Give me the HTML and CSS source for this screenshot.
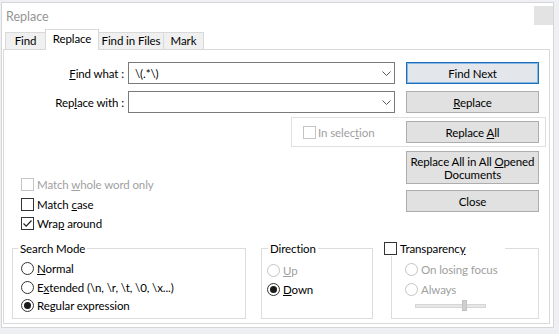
FILE: index.html
```html
<!DOCTYPE html>
<html>
<head>
<meta charset="utf-8">
<link rel="stylesheet" href="styles.css">
</head>
<body>
<div class="window">
  <div class="titlebar">
    <span class="title">Replace</span>
    <span class="close-btn"></span>
  </div>
  <div class="tabs">
    <div class="tab w-find">Find</div>
    <div class="tab active w-replace">Replace</div>
    <div class="tab w-files">Find in Files</div>
    <div class="tab w-mark">Mark</div>
  </div>
  <div class="panel">
    <div class="row first">
      <label class="lbl"><u>F</u>ind what :</label>
      <div class="combo"><span class="combo-text">\(.*\)</span><svg class="chev" width="9" height="5" viewBox="0 0 9 5"><path d="M0.5 0.5 L4.5 4.5 L8.5 0.5" fill="none" stroke="#555" stroke-width="1"/></svg></div>
      <button class="btn default">Find Next</button>
    </div>
    <div class="row second">
      <label class="lbl">Rep<u>l</u>ace with :</label>
      <div class="combo"><span class="combo-text"></span><svg class="chev" width="9" height="5" viewBox="0 0 9 5"><path d="M0.5 0.5 L4.5 4.5 L8.5 0.5" fill="none" stroke="#555" stroke-width="1"/></svg></div>
      <button class="btn"><u>R</u>eplace</button>
    </div>
    <div class="selbox">
      <span class="chk disabled"><span class="box"></span><span>In selec<u>t</u>ion</span></span>
      <button class="btn">Replace <u>A</u>ll</button>
    </div>
    <div class="mid">
      <div class="checks">
        <div class="chk disabled"><span class="box"></span><span>Match <u>w</u>hole word only</span></div>
        <div class="chk gap7"><span class="box"></span><span>Match <u>c</u>ase</span></div>
        <div class="chk gap6"><span class="box"><svg width="11" height="11" viewBox="0 0 11 11"><path d="M1.5 5.5 L4.2 8.2 L9.5 2.5" fill="none" stroke="#222" stroke-width="1.2"/></svg></span><span>Wra<u>p</u> around</span></div>
      </div>
      <div class="btncol">
        <button class="btn tall">Replace All in All <u>O</u>pened<br>Documents</button>
        <button class="btn">Close</button>
      </div>
    </div>
    <div class="groups">
      <fieldset class="grp g-search">
        <legend class="leg-search">Search Mode</legend>
        <div class="grp-body search-body">
          <div class="radio"><span class="dot"></span><span><u>N</u>ormal</span></div>
          <div class="radio r-gap6"><span class="dot"></span><span>E<u>x</u>tended (\n, \r, \t, \0, \x...)</span></div>
          <div class="radio on r-gap5"><span class="dot"></span><span>Re<u>g</u>ular expression</span></div>
        </div>
      </fieldset>
      <fieldset class="grp g-dir">
        <legend class="leg-dir">Direction</legend>
        <div class="grp-body dir-body">
          <div class="radio disabled"><span class="dot"></span><span><u>U</u>p</span></div>
          <div class="radio on r-gap6"><span class="dot"></span><span><u>D</u>own</span></div>
        </div>
      </fieldset>
      <fieldset class="grp g-trans">
        <legend class="leg-trans"><span class="chk"><span class="box"></span><span>Transparenc<u>y</u></span></span></legend>
        <div class="grp-body trans-body">
          <div class="radio disabled"><span class="dot"></span><span>On losing focus</span></div>
          <div class="radio disabled r-gap7"><span class="dot"></span><span>Always</span></div>
          <div class="slider"><span class="track"></span><span class="thumb"></span></div>
        </div>
      </fieldset>
    </div>
  </div>
</div>
</body>
</html>
```
FILE: styles.css
```css
* { box-sizing: border-box; }
html, body { margin: 0; padding: 0; }
body {
  width: 559px;
  height: 334px;
  overflow: hidden;
  background: #eef0f3;
  font-family: Lato, "Liberation Sans", sans-serif;
  font-size: 11.5px;
  letter-spacing: -0.1px;
  color: #000;
}
u { text-underline-offset: 1px; }

.window {
  margin: 2px 5px 0 1px;
  height: 326px;
  border: 1px solid #d6d6da;
  background: #fff;
  display: flex;
  flex-direction: column;
}

.titlebar {
  height: 26px;
  display: flex;
  justify-content: space-between;
  align-items: center;
  padding-left: 4px;
}
.title { font-size: 12.5px; color: #959595; letter-spacing: 0; }
.close-btn {
  align-self: flex-start;
  margin-top: 3px;
  width: 19px;
  height: 19px;
  background: #e3e3e3;
}

.tabs {
  height: 20px;
  display: flex;
  align-items: flex-end;
  padding-left: 3px;
}
.tab {
  height: 17px;
  border: 1px solid #d9d9d9;
  border-bottom: none;
  background: #f0f0f0;
  margin-left: -1px;
  display: flex;
  align-items: center;
  justify-content: center;
  padding-bottom: 1px;
}
.tab.active {
  height: 21px;
  margin-bottom: -1px;
  background: #fff;
  position: relative;
  z-index: 1;
  padding-bottom: 4px;
}
.w-find { width: 41px; margin-left: 0; }
.w-replace { width: 54px; }
.w-files { width: 66px; }
.w-mark { width: 41px; }

.panel {
  flex: 1;
  margin: 0 3px 3px 1px;
  border: 1px solid #d9d9d9;
  background: #fff;
}

.row {
  display: flex;
  align-items: center;
  height: 22px;
}
.row.first { margin-top: 12px; }
.row.second { margin-top: 7px; }
.lbl { width: 120px; text-align: right; flex: none; }
.combo {
  margin-left: 4px;
  width: 267px;
  height: 22px;
  border: 1px solid #7a7a7a;
  display: flex;
  align-items: center;
  justify-content: space-between;
  padding: 0 3px 0 6px;
}
.chev { display: block; }

.btn {
  flex: none;
  width: 133px;
  height: 22px;
  margin: 0;
  padding: 0;
  border: 1px solid #adadad;
  background: #e1e1e1;
  font: inherit;
  letter-spacing: inherit;
  color: #000;
  text-align: center;
}
.row .btn { margin-left: 11px; }
.btn.default {
  border-color: #1f6fb8;
  box-shadow: inset 0 0 0 1px #86b7e4;
  background: #e3e6ea;
}
.btn.tall { height: 33px; line-height: 13px; }

.selbox {
  margin: 4px 0 0 287px;
  width: 255px;
  height: 30px;
  border: 1px solid #e0e0e0;
  padding: 3px 6px 3px 11px;
  display: flex;
  align-items: center;
  justify-content: space-between;
}

.chk { display: flex; align-items: center; height: 13px; }
.chk .box {
  flex: none;
  width: 13px;
  height: 13px;
  border: 1px solid #333;
  background: #fff;
  margin-right: 3px;
  display: flex;
  align-items: center;
  justify-content: center;
}
.chk .box svg { display: block; }
.chk.disabled { color: #a0a0a0; }
.chk.disabled .box { border-color: #c4c4c4; }
.selbox .chk .box { margin-right: 2px; }

.mid {
  display: flex;
  justify-content: space-between;
  height: 83px;
}
.checks {
  margin-left: 17px;
  padding-top: 31px;
  display: flex;
  flex-direction: column;
}
.gap7 { margin-top: 7px; }
.gap6 { margin-top: 6px; }
.btncol {
  margin-right: 10px;
  padding-top: 4px;
  display: flex;
  flex-direction: column;
  gap: 6px;
}

.groups {
  display: flex;
  align-items: flex-start;
  margin-top: 11px;
}
.grp {
  margin: 0;
  padding: 0;
  min-width: 0;
  height: 78px;
  border: 1px solid #dcdcdc;
}
.grp legend {
  padding: 0 2px;
  line-height: 15px;
  height: 15px;
}
.g-search { margin-left: 8px; width: 234px; }
.g-dir { margin-left: 15px; width: 112px; }
.g-trans { margin-left: 18px; width: 148px; }
.leg-search { margin-left: 5px; }
.leg-dir { margin-left: 6px; }
.grp .leg-trans {
  margin-left: -8px;
  width: 121px;
  padding: 0;
  display: flex;
  align-items: center;
}

.grp-body { display: flex; flex-direction: column; }
.search-body { padding: 6px 0 0 8px; }
.dir-body { padding: 8px 0 0 5px; }
.trans-body { padding: 7px 0 0 13px; }

.radio { display: flex; align-items: center; height: 13px; }
.radio .dot {
  flex: none;
  width: 13px;
  height: 13px;
  border-radius: 50%;
  border: 1px solid #333;
  background: #fff;
  margin-right: 3px;
  display: flex;
  align-items: center;
  justify-content: center;
}
.radio.on .dot::after {
  content: "";
  width: 7px;
  height: 7px;
  border-radius: 50%;
  background: #1a1a1a;
}
.radio.disabled { color: #a0a0a0; }
.radio.disabled .dot { border-color: #c4c4c4; }
.r-gap5 { margin-top: 5px; }
.r-gap6 { margin-top: 6px; }
.r-gap7 { margin-top: 7px; }

.slider {
  margin: 4px 0 0 10px;
  width: 71px;
  height: 11px;
  display: flex;
  align-items: center;
}
.track {
  width: 71px;
  height: 4px;
  background: #e7e7e7;
  border: 1px solid #d6d6d6;
}
.thumb {
  flex: none;
  width: 5px;
  height: 11px;
  margin-left: -24px;
  background: #cfcfcf;
  border: 1px solid #c2c2c2;
}
```
